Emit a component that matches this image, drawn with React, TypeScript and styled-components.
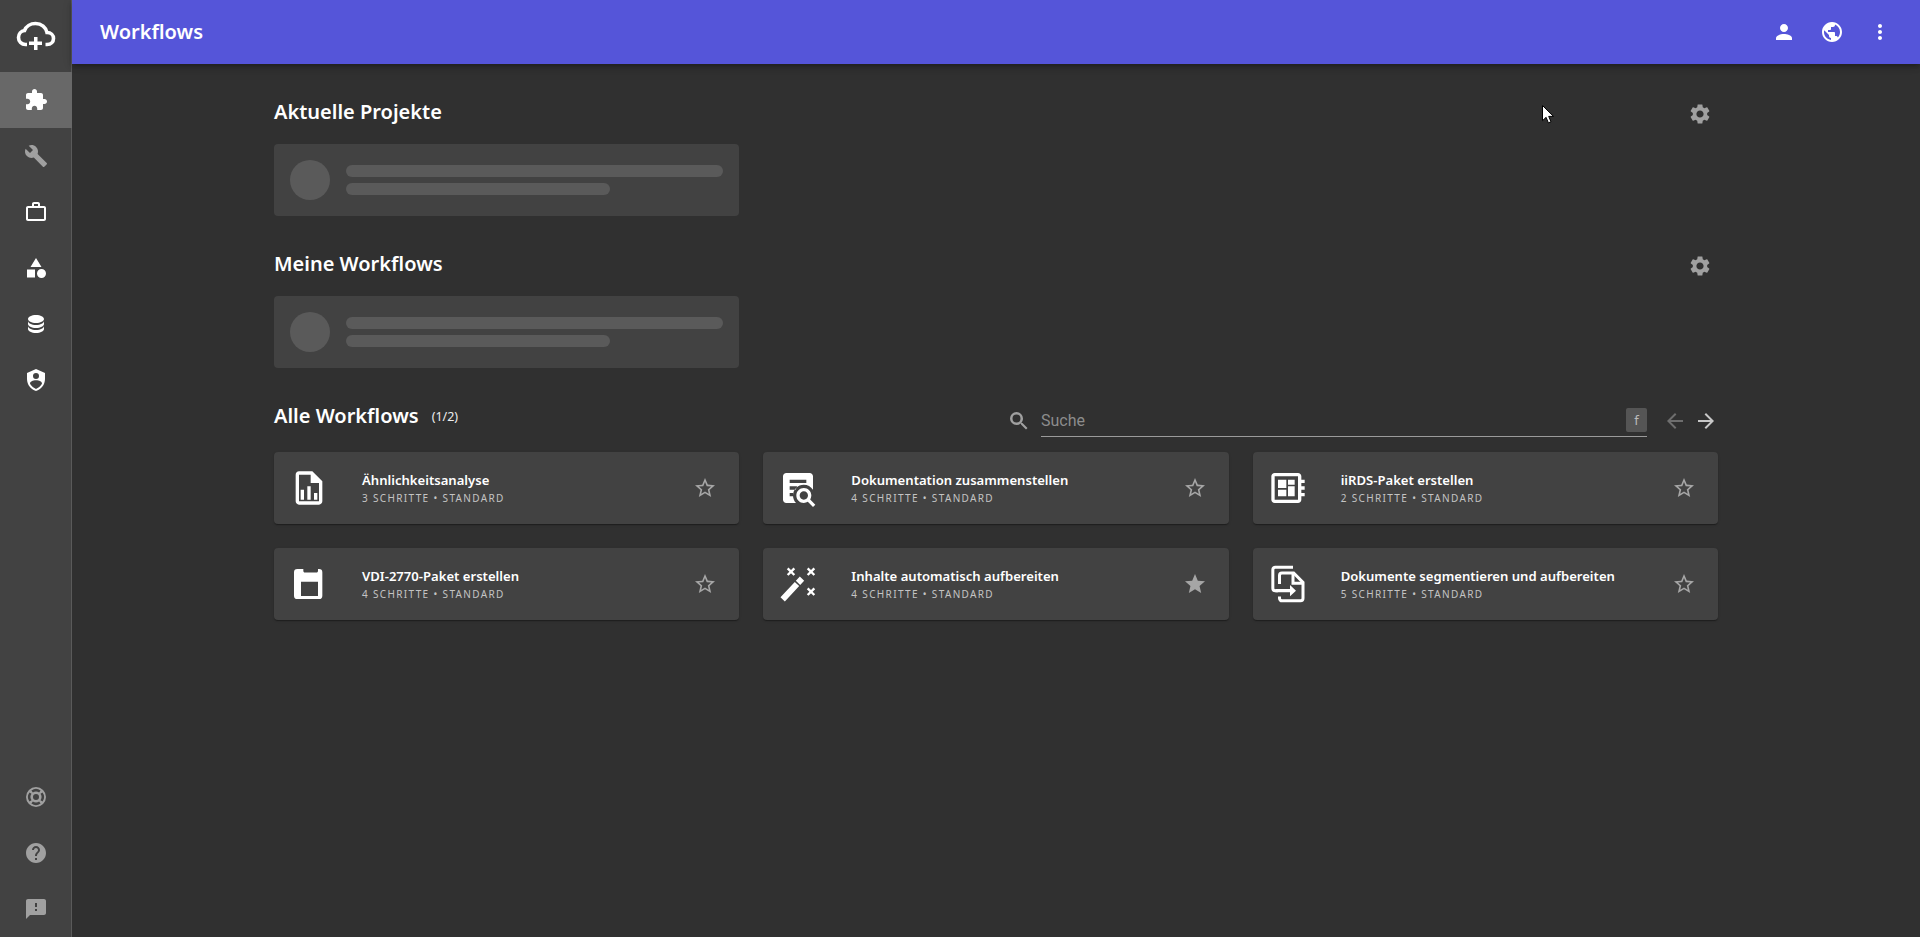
import React from 'react'
import styled, { createGlobalStyle } from 'styled-components'

const GlobalStyle = createGlobalStyle`
  html, body {
    margin: 0;
    height: 100%;
    background: #303030;
    font-family: 'Noto Sans', sans-serif;
  }
  #root {
    height: 100%;
  }
`

const paths = {
  extension: 'M20.5 11H19V7c0-1.1-.9-2-2-2h-4V3.5C13 2.12 11.88 1 10.5 1S8 2.12 8 3.5V5H4c-1.1 0-1.99.9-1.99 2v3.8H3.5c1.49 0 2.7 1.21 2.7 2.7s-1.21 2.7-2.7 2.7H2V20c0 1.1.9 2 2 2h3.8v-1.5c0-1.49 1.21-2.7 2.7-2.7 1.49 0 2.7 1.21 2.7 2.7V22H17c1.1 0 2-.9 2-2v-4h1.5c1.38 0 2.5-1.12 2.5-2.5S21.88 11 20.5 11z',
  build: 'M22.7 19l-9.1-9.1c.9-2.3.4-5-1.5-6.9-2-2-5-2.4-7.4-1.3L9 6 6 9 1.6 4.7C.4 7.1.9 10.1 2.9 12.1c1.9 1.9 4.6 2.4 6.9 1.5l9.1 9.1c.4.4 1 .4 1.4 0l2.3-2.3c.5-.4.5-1.1.1-1.4z',
  work: 'M14 6V4h-4v2h4zM4 8v11h16V8H4zm16-2c1.11 0 2 .89 2 2v11c0 1.11-.89 2-2 2H4c-1.11 0-2-.89-2-2l.01-11c0-1.11.88-2 1.99-2h4V4c0-1.11.89-2 2-2h4c1.11 0 2 .89 2 2v2h4z',
  category: 'M12 2l-5.5 9h11zM17.5 13a4.5 4.5 0 1 0 0 9 4.5 4.5 0 0 0 0-9zM3 13.5h8v8H3z',
  database: 'M12 3C7.58 3 4 4.79 4 7s3.58 4 8 4 8-1.79 8-4-3.58-4-8-4M4 9v3c0 2.21 3.58 4 8 4s8-1.79 8-4V9c0 2.21-3.58 4-8 4s-8-1.79-8-4m0 5v3c0 2.21 3.58 4 8 4s8-1.79 8-4v-3c0 2.21-3.58 4-8 4s-8-1.79-8-4z',
  shield: 'M12 1L3 5v6c0 5.55 3.84 10.74 9 12 5.16-1.26 9-6.45 9-12V5l-9-4m0 4a3 3 0 0 1 3 3 3 3 0 0 1-3 3 3 3 0 0 1-3-3 3 3 0 0 1 3-3m5.13 12A9.69 9.69 0 0 1 12 20.92 9.69 9.69 0 0 1 6.87 17c-.34-.5-.63-1-.87-1.53 0-1.72 2.71-3.12 6-3.12s6 1.37 6 3.12c-.24.53-.53 1.03-.87 1.53z',
  lifebuoy: 'M12 2a10 10 0 1 0 0 20 10 10 0 0 0 0-20zM12 9a3 3 0 1 1 0 6 3 3 0 0 1 0-6zM7.41 5.45A8 8 0 0 1 16.59 5.45L15.15 7.5A5.5 5.5 0 0 0 8.85 7.5zM18.55 7.41A8 8 0 0 1 18.55 16.59L16.5 15.15A5.5 5.5 0 0 0 16.5 8.85zM16.59 18.55A8 8 0 0 1 7.41 18.55L8.85 16.5A5.5 5.5 0 0 0 15.15 16.5zM5.45 16.59A8 8 0 0 1 5.45 7.41L7.5 8.85A5.5 5.5 0 0 0 7.5 15.15z',
  help: 'M12 2C6.48 2 2 6.48 2 12s4.48 10 10 10 10-4.48 10-10S17.52 2 12 2zm1 17h-2v-2h2v2zm2.07-7.75l-.9.92C13.45 12.9 13 13.5 13 15h-2v-.5c0-1.1.45-2.1 1.17-2.83l1.24-1.26c.37-.36.59-.86.59-1.41 0-1.1-.9-2-2-2s-2 .9-2 2H8c0-2.21 1.79-4 4-4s4 1.79 4 4c0 .88-.36 1.68-.93 2.25z',
  feedback: 'M20 2H4c-1.1 0-1.99.9-1.99 2L2 22l4-4h14c1.1 0 2-.9 2-2V4c0-1.1-.9-2-2-2zm-7 12h-2v-2h2v2zm0-4h-2V6h2v4z',
  person: 'M12 12c2.21 0 4-1.79 4-4s-1.79-4-4-4-4 1.79-4 4 1.79 4 4 4zm0 2c-2.67 0-8 1.34-8 4v2h16v-2c0-2.66-5.33-4-8-4z',
  globe: 'M12 2C6.48 2 2 6.48 2 12s4.48 10 10 10 10-4.48 10-10S17.52 2 12 2zm-1 17.93c-3.95-.49-7-3.85-7-7.93 0-.62.08-1.21.21-1.79L9 15v1c0 1.1.9 2 2 2v1.93zm6.9-2.54c-.26-.81-1-1.39-1.9-1.39h-1v-3c0-.55-.45-1-1-1H8v-2h2c.55 0 1-.45 1-1V7h2c1.1 0 2-.9 2-2v-.41c2.93 1.19 5 4.06 5 7.41 0 2.08-.8 3.97-2.1 5.39z',
  more: 'M12 8c1.1 0 2-.9 2-2s-.9-2-2-2-2 .9-2 2 .9 2 2 2zm0 2c-1.1 0-2 .9-2 2s.9 2 2 2 2-.9 2-2-.9-2-2-2zm0 6c-1.1 0-2 .9-2 2s.9 2 2 2 2-.9 2-2-.9-2-2-2z',
  settings: 'M19.14 12.94c.04-.3.06-.61.06-.94 0-.32-.02-.64-.07-.94l2.03-1.58c.18-.14.23-.41.12-.61l-1.92-3.32c-.12-.22-.37-.29-.59-.22l-2.39.96c-.5-.38-1.03-.7-1.62-.94l-.36-2.54c-.04-.24-.24-.41-.48-.41h-3.84c-.24 0-.43.17-.47.41l-.36 2.54c-.59.24-1.13.57-1.62.94l-2.39-.96c-.22-.08-.47 0-.59.22L2.74 8.87c-.12.21-.08.47.12.61l2.03 1.58c-.05.3-.09.63-.09.94s.02.64.07.94l-2.03 1.58c-.18.14-.23.41-.12.61l1.92 3.32c.12.22.37.29.59.22l2.39-.96c.5.38 1.03.7 1.62.94l.36 2.54c.05.24.24.41.48.41h3.84c.24 0 .44-.17.47-.41l.36-2.54c.59-.24 1.13-.56 1.62-.94l2.39.96c.22.08.47 0 .59-.22l1.92-3.32c.12-.22.07-.47-.12-.61l-2.01-1.58zM12 15.6c-1.98 0-3.6-1.62-3.6-3.6s1.62-3.6 3.6-3.6 3.6 1.62 3.6 3.6-1.62 3.6-3.6 3.6z',
  search: 'M9.5 3A6.5 6.5 0 0 1 16 9.5c0 1.61-.59 3.09-1.56 4.23l.27.27h.79l5 5-1.5 1.5-5-5v-.79l-.27-.27A6.52 6.52 0 0 1 9.5 16 6.5 6.5 0 0 1 3 9.5 6.5 6.5 0 0 1 9.5 3m0 2.5a4 4 0 1 0 0 8 4 4 0 0 0 0-8z',
  back: 'M20 11H7.83l5.59-5.59L12 4l-8 8 8 8 1.41-1.41L7.83 13H20v-2z',
  forward: 'M12 4l-1.41 1.41L16.17 11H4v2h12.17l-5.58 5.59L12 20l8-8z',
  starBorder: 'M22 9.24l-7.19-.62L12 2 9.19 8.63 2 9.24l5.46 4.73L5.82 21 12 17.27 18.18 21l-1.63-7.03L22 9.24zM12 15.4l-3.76 2.27 1-4.28-3.32-2.88 4.38-.38L12 6.1l1.71 4.04 4.38.38-3.32 2.88 1 4.28L12 15.4z',
  star: 'M12 17.27L18.18 21l-1.64-7.03L22 9.24l-7.19-.61L12 2 9.19 8.63 2 9.24l5.46 4.73L5.82 21z',
  fileChart: 'M14 2H6C4.89 2 4 2.89 4 4V20C4 21.11 4.89 22 6 22H18C19.11 22 20 21.11 20 20V8L14 2M18 20H6V4H13V9H18V20M9 13V19H7V13H9M15 15V19H17V15H15M11 11V19H13V11H11Z',
  save: 'M5 3h3.6v1.2c0 .5.4.9.9.9h7c.5 0 .9-.4.9-.9V3h.6a2 2 0 0 1 2 2v14a2 2 0 0 1-2 2H5a2 2 0 0 1-2-2V5a2 2 0 0 1 2-2zm2.2 7.6v8.6h10.2v-8.6H7.2z',
  docSearch: 'M19 3H5C3.89 3 3 3.89 3 5V19C3 20.1 3.9 21 5 21H10.81C9.66 19.85 9 18.22 9 16.5 9 12.91 11.91 10 15.5 10 17.77 10 19.76 11.18 21 13.03V5C21 3.89 20.1 3 19 3M9 17H7V15H9V17M10.5 13H7V11H11.5L10.5 13M17 9H7V7H17V9M15.5 12C18 12 20 14 20 16.5 20 17.38 19.75 18.2 19.31 18.9L22.39 22 21 23.39 17.88 20.32C17.19 20.75 16.37 21 15.5 21 13 21 11 19 11 16.5S13 12 15.5 12M15.5 14C14.12 14 13 15.12 13 16.5S14.12 19 15.5 19 18 17.88 18 16.5 16.88 14 15.5 14Z',
  board: 'M22 9V7h-2V5c0-1.1-.9-2-2-2H4c-1.1 0-2 .9-2 2v14c0 1.1.9 2 2 2h14c1.1 0 2-.9 2-2v-2h2v-2h-2v-2h2v-2h-2V9h2zm-4 10H4V5h14v14zM6 13h5v4H6zm6-6h4v3h-4zM6 7h5v5H6zm6 4h4v6h-4z',
}

type IconName = keyof typeof paths

const Svg = styled.svg<{ $size?: number; $color?: string }>`
  width: ${p => p.$size ?? 24}px;
  height: ${p => p.$size ?? 24}px;
  fill: ${p => p.$color ?? 'currentColor'};
  fill-rule: evenodd;
  display: block;
  flex: none;
`

const Icon = ({ name, size, color }: { name: IconName; size?: number; color?: string }) => (
  <Svg viewBox="0 0 24 24" $size={size} $color={color}>
    <path d={paths[name]} />
  </Svg>
)

const CloudLogo = () => (
  <svg width="40" height="40" viewBox="0 0 40 40" fill="none">
    <path
      d="M11 28.5H9.5C5.5 28.5 2.5 25.5 2.5 21.5C2.5 18 5 15 8.5 14.5C10 10.5 14.5 7.5 19.5 7.5C25.5 7.5 30 11.5 31 16.5C35 16.5 37.5 19 37.5 22.5C37.5 26 35 28.5 31 28.5H29.5"
      stroke="#fff"
      strokeWidth="3.6"
    />
    <path d="M18 21h3.5v4.5H26V29h-4.5v5H18v-5h-5v-3.5h5z" fill="#fff" />
  </svg>
)

const WandIcon = () => (
  <Svg viewBox="0 0 24 24" $size={40}>
    <g fill="none" stroke="#fff">
      <path d="M2.8 21.2 11.4 12M12 11.3 14.4 8.8" strokeWidth="3.6" />
      <path d="M5.8 2.6l4 4M9.8 2.6l-4 4M17.8 2.6l4 4M21.8 2.6l-4 4M17.8 14.6l4 4M21.8 14.6l-4 4" strokeWidth="1.4" />
    </g>
  </Svg>
)

const FileMoveIcon = () => (
  <Svg viewBox="0 0 24 24" $size={40}>
    <g fill="none" stroke="#fff" strokeWidth="1.8">
      <path d="M15 1.9H4.4a1.5 1.5 0 0 0-1.5 1.5v11.2a1.5 1.5 0 0 0 1.5 1.5H6" />
      <path d="M6.9 12V6.9a1.5 1.5 0 0 1 1.5-1.5h7L21 11v9.6a1.5 1.5 0 0 1-1.5 1.5H8.4a1.5 1.5 0 0 1-1.5-1.5V19.5" />
      <path d="M15 5.5V11.5H21" />
    </g>
    <path d="M4.5 15h8.7v-2.4l3.6 3.4-3.6 3.4V17H4.5z" />
  </Svg>
)

const Shell = styled.div`
  display: flex;
  height: 937px;
  overflow: hidden;
  background: #303030;
  color: #fff;
`

const Sidebar = styled.nav`
  width: 72px;
  box-sizing: border-box;
  flex: none;
  display: flex;
  flex-direction: column;
  background: #424242;
  border-right: 1px solid #5a5a5a;
`

const LogoBox = styled.div`
  height: 72px;
  display: flex;
  align-items: center;
  justify-content: center;
`

const NavItem = styled.div<{ $active?: boolean; $muted?: boolean }>`
  height: 56px;
  display: flex;
  align-items: center;
  justify-content: center;
  margin-right: ${p => (p.$active ? '-1px' : '0')};
  padding-right: ${p => (p.$active ? '1px' : '0')};
  background: ${p => (p.$active ? '#686868' : 'transparent')};
  color: ${p => (p.$muted ? '#a0a0a0' : '#fff')};
`

const NavSpacer = styled.div`
  flex: 1;
`

const Main = styled.div`
  flex: 1;
  min-width: 0;
  display: flex;
  flex-direction: column;
`

const TopBar = styled.header`
  height: 64px;
  flex: none;
  display: flex;
  align-items: center;
  padding: 0 16px 0 28px;
  background: #5555d9;
  box-shadow: 0 2px 4px -1px rgba(0, 0, 0, 0.2), 0 4px 5px 0 rgba(0, 0, 0, 0.14), 0 1px 10px 0 rgba(0, 0, 0, 0.12);
`

const TopTitle = styled.h1`
  flex: 1;
  margin: 0;
  font-size: 20px;
  line-height: 32px;
  font-weight: 600;
`

const TopAction = styled.div`
  width: 48px;
  height: 48px;
  display: flex;
  align-items: center;
  justify-content: center;
`

const Content = styled.main`
  width: 1444px;
  margin: 0 auto;
  padding-top: 32px;
`

const Section = styled.section`
  margin-bottom: 32px;
`

const SectionHead = styled.div`
  height: 32px;
  display: flex;
  align-items: center;
  justify-content: space-between;
  margin-bottom: 16px;
`

const Heading = styled.h2`
  margin: 0;
  font-size: 20px;
  line-height: 32px;
  font-weight: 600;
  color: #fff;
`

const GearButton = styled.div`
  width: 48px;
  height: 48px;
  margin: 4px -6px 0 0;
  display: flex;
  align-items: center;
  justify-content: center;
  color: #a0a0a0;
`

const SkeletonCard = styled.div`
  width: 465px;
  height: 72px;
  box-sizing: border-box;
  padding: 0 16px;
  display: flex;
  align-items: center;
  gap: 16px;
  border-radius: 4px;
  background: #424242;
`

const SkeletonCircle = styled.div`
  width: 40px;
  height: 40px;
  flex: none;
  border-radius: 50%;
  background: #5a5a5a;
`

const SkeletonLines = styled.div`
  flex: 1;
  display: flex;
  flex-direction: column;
  gap: 6px;
`

const SkeletonLine = styled.div<{ $width: string }>`
  width: ${p => p.$width};
  height: 12px;
  border-radius: 6px;
  background: #5a5a5a;
`

const AllHead = styled.div`
  height: 40px;
  display: flex;
  align-items: flex-start;
  margin-bottom: 12px;
`

const HeadTitle = styled.div`
  height: 32px;
  display: flex;
  align-items: center;
`

const Count = styled.span`
  margin-left: 13px;
  font-size: 12.5px;
  color: #eee;
`

const SearchArea = styled.div`
  margin-left: auto;
  width: 711px;
  height: 37px;
  display: flex;
  align-items: center;
`

const SearchGlyph = styled.div`
  width: 24px;
  height: 24px;
  margin: 4px 10px 0 0;
  color: #a0a0a0;
`

const SearchField = styled.div`
  flex: 1;
  height: 37px;
  box-sizing: border-box;
  padding-top: 4px;
  display: flex;
  align-items: center;
  justify-content: space-between;
  border-bottom: 1px solid #9a9a9a;
`

const Placeholder = styled.span`
  font-family: 'Roboto', sans-serif;
  font-size: 16px;
  color: #8c8c8c;
`

const KeyHint = styled.span`
  width: 21px;
  height: 24px;
  display: flex;
  align-items: center;
  justify-content: center;
  border-radius: 2px;
  background: #555;
  font-size: 13px;
  color: #bbb;
`

const Pager = styled.div`
  margin: 4px 0 0 16px;
  display: flex;
  gap: 7px;
`

const Grid = styled.div`
  display: grid;
  grid-template-columns: repeat(3, 1fr);
  gap: 24px;
`

const Card = styled.article`
  height: 72px;
  display: flex;
  align-items: center;
  padding: 0 16px;
  border-radius: 4px;
  background: #424242;
  box-shadow: 0 2px 1px -1px rgba(0, 0, 0, 0.2), 0 1px 1px 0 rgba(0, 0, 0, 0.14), 0 1px 3px 0 rgba(0, 0, 0, 0.12);
`

const CardIcon = styled.div`
  width: 40px;
  height: 40px;
  margin-left: -1px;
  flex: none;
`

const CardText = styled.div`
  flex: 1;
  min-width: 0;
  margin-left: 33px;
`

const CardTitle = styled.div`
  font-size: 13.1px;
  line-height: 20px;
  font-weight: 600;
  color: #fff;
  margin-top: -1px;
`

const CardMeta = styled.div`
  font-size: 10px;
  line-height: 16px;
  letter-spacing: 1.35px;
  text-transform: uppercase;
  color: #c4c4c4;
`

const StarBox = styled.div`
  width: 24px;
  height: 24px;
  margin-right: 6px;
  color: #a6a6a6;
`

const MouseCursor = styled.svg`
  position: absolute;
  left: 1542px;
  top: 105px;
  width: 12px;
  height: 19px;
`

const workflows: { title: string; meta: string; icon: React.ReactNode; starred?: boolean }[] = [
  { title: 'Ähnlichkeitsanalyse', meta: '3 Schritte • Standard', icon: <Icon name="fileChart" size={40} /> },
  { title: 'Dokumentation zusammenstellen', meta: '4 Schritte • Standard', icon: <Icon name="docSearch" size={40} /> },
  { title: 'iiRDS-Paket erstellen', meta: '2 Schritte • Standard', icon: <Icon name="board" size={40} /> },
  { title: 'VDI-2770-Paket erstellen', meta: '4 Schritte • Standard', icon: <Icon name="save" size={40} /> },
  { title: 'Inhalte automatisch aufbereiten', meta: '4 Schritte • Standard', icon: <WandIcon />, starred: true },
  { title: 'Dokumente segmentieren und aufbereiten', meta: '5 Schritte • Standard', icon: <FileMoveIcon /> },
]

const Skeleton = () => (
  <SkeletonCard>
    <SkeletonCircle />
    <SkeletonLines>
      <SkeletonLine $width="100%" />
      <SkeletonLine $width="70%" />
    </SkeletonLines>
  </SkeletonCard>
)

export default function App() {
  return (
    <>
      <GlobalStyle />
      <Shell>
        <Sidebar>
          <LogoBox>
            <CloudLogo />
          </LogoBox>
          <NavItem $active><Icon name="extension" /></NavItem>
          <NavItem $muted><Icon name="build" /></NavItem>
          <NavItem><Icon name="work" /></NavItem>
          <NavItem><Icon name="category" /></NavItem>
          <NavItem><Icon name="database" /></NavItem>
          <NavItem><Icon name="shield" /></NavItem>
          <NavSpacer />
          <NavItem $muted><Icon name="lifebuoy" /></NavItem>
          <NavItem $muted><Icon name="help" /></NavItem>
          <NavItem $muted><Icon name="feedback" /></NavItem>
        </Sidebar>
        <Main>
          <TopBar>
            <TopTitle>Workflows</TopTitle>
            <TopAction><Icon name="person" /></TopAction>
            <TopAction><Icon name="globe" /></TopAction>
            <TopAction><Icon name="more" /></TopAction>
          </TopBar>
          <Content>
            <Section>
              <SectionHead>
                <Heading>Aktuelle Projekte</Heading>
                <GearButton><Icon name="settings" /></GearButton>
              </SectionHead>
              <Skeleton />
            </Section>
            <Section>
              <SectionHead>
                <Heading>Meine Workflows</Heading>
                <GearButton><Icon name="settings" /></GearButton>
              </SectionHead>
              <Skeleton />
            </Section>
            <AllHead>
              <HeadTitle>
                <Heading>Alle Workflows</Heading>
                <Count>(1/2)</Count>
              </HeadTitle>
              <SearchArea>
                <SearchGlyph><Icon name="search" /></SearchGlyph>
                <SearchField>
                  <Placeholder>Suche</Placeholder>
                  <KeyHint>f</KeyHint>
                </SearchField>
                <Pager>
                  <Icon name="back" color="#6e6e6e" />
                  <Icon name="forward" color="#c8c8c8" />
                </Pager>
              </SearchArea>
            </AllHead>
            <Grid>
              {workflows.map(w => (
                <Card key={w.title}>
                  <CardIcon>{w.icon}</CardIcon>
                  <CardText>
                    <CardTitle>{w.title}</CardTitle>
                    <CardMeta>{w.meta}</CardMeta>
                  </CardText>
                  <StarBox><Icon name={w.starred ? 'star' : 'starBorder'} /></StarBox>
                </Card>
              ))}
            </Grid>
          </Content>
        </Main>
      </Shell>
      <MouseCursor viewBox="0 0 12 19">
        <path d="M.5.5v15.2l3.6-3.4 2.3 5.6 2.6-1.1-2.3-5.4h4.8z" fill="#fff" stroke="#000" strokeWidth="1" />
      </MouseCursor>
    </>
  )
}
